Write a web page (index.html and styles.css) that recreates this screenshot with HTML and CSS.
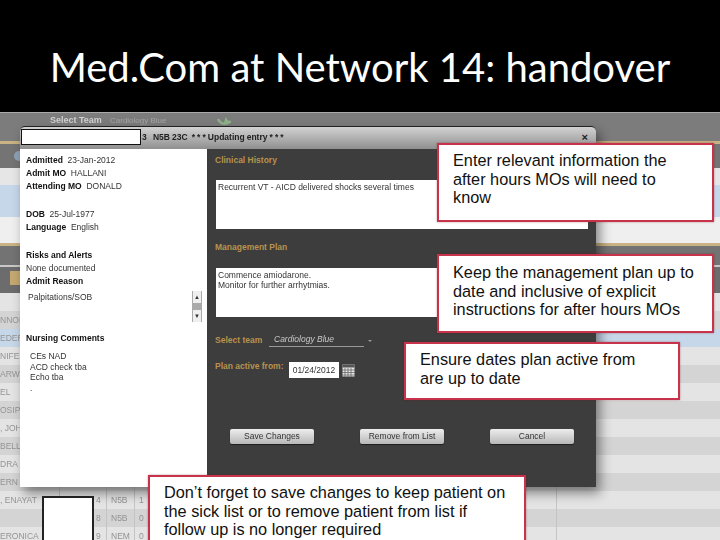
FILE: index.html
```html
<!DOCTYPE html>
<html lang="en">
<head>
<meta charset="utf-8">
<title>Med.Com at Network 14: handover</title>
<link rel="stylesheet" href="styles.css">
</head>
<body>
<main class="slide">
  <header class="slide-head"><h1>Med.Com at Network 14: handover</h1></header>

  <section class="backdrop">
    <div class="bar bar-top">
      <span class="team-label">Select Team</span>
      <span class="team-value">Cardiology Blue</span>
      <svg class="refresh" width="14" height="10" viewBox="0 0 14 10"><path d="M1 2c2 5 7 6 12 3-2 0-3 0-4-2l-1 3" fill="none" stroke="#8fb08a" stroke-width="2.4"/></svg>
    </div>
    <div class="tan"></div>
    <div class="bar bar-mid"><span class="dot"></span></div>
    <div class="row-a r17"></div>
    <div class="row-blue r32"></div>
    <div class="row-w r26"></div>
    <div class="tan"></div>
    <div class="bar bar-low"></div>
    <div class="bar-rule"></div>
    <div class="bar bar-tools"><span class="chip"></span></div>
    <div class="rows">
      <div class="row row-light"><span class="c-name"></span><span class="c-a"></span><span class="c-b"></span><span class="c-c"></span></div>
      <div class="row row-dark"><span class="c-name">NNON</span><span class="c-a"></span><span class="c-b"></span><span class="c-c"></span></div>
      <div class="row row-sel"><span class="c-name">EDER</span><span class="c-a"></span><span class="c-b"></span><span class="c-c"></span></div>
      <div class="row row-light"><span class="c-name">NIFER</span><span class="c-a"></span><span class="c-b"></span><span class="c-c"></span></div>
      <div class="row row-dark"><span class="c-name">ARW</span><span class="c-a"></span><span class="c-b"></span><span class="c-c"></span></div>
      <div class="row row-light"><span class="c-name">EL</span><span class="c-a"></span><span class="c-b"></span><span class="c-c"></span></div>
      <div class="row row-dark"><span class="c-name">OSIP</span><span class="c-a"></span><span class="c-b"></span><span class="c-c"></span></div>
      <div class="row row-light"><span class="c-name">, JOH</span><span class="c-a"></span><span class="c-b"></span><span class="c-c"></span></div>
      <div class="row row-dark"><span class="c-name">BELL</span><span class="c-a"></span><span class="c-b"></span><span class="c-c"></span></div>
      <div class="row row-light"><span class="c-name">DRA</span><span class="c-a"></span><span class="c-b"></span><span class="c-c"></span></div>
      <div class="row row-dark"><span class="c-name">ERN</span><span class="c-a"></span><span class="c-b"></span><span class="c-c"></span></div>
      <div class="row row-light"><span class="c-name">, ENAYAT</span><span class="c-a">4</span><span class="c-b">N5B</span><span class="c-c">1</span></div>
      <div class="row row-dark"><span class="c-name"></span><span class="c-a">8</span><span class="c-b">N5B</span><span class="c-c">0</span></div>
      <div class="row row-light"><span class="c-name">ERONICA</span><span class="c-a">9</span><span class="c-b">NEM</span><span class="c-c">0</span></div>
    </div>
  </section>

  <section class="modal">
    <div class="modal-title">
      <span class="mask"></span>
      <span class="title-text">3&nbsp;&nbsp; N5B 23C &nbsp;* * * Updating entry * * *</span>
      <span class="close">×</span>
    </div>
    <div class="modal-body">
      <div class="info">
        <p><b>Admitted</b>&nbsp; 23-Jan-2012</p>
        <p><b>Admit MO</b>&nbsp; HALLANI</p>
        <p><b>Attending MO</b>&nbsp; DONALD</p>
        <p class="gap"><b>DOB</b>&nbsp; 25-Jul-1977</p>
        <p><b>Language</b>&nbsp; English</p>
        <p class="gap"><b>Risks and Alerts</b></p>
        <p>None documented</p>
        <p><b>Admit Reason</b></p>
        <div class="reason">
          <span>Palpitations/SOB</span>
          <div class="scroll">
            <span class="scroll-btn">▲</span>
            <span class="scroll-thumb"></span>
            <span class="scroll-btn">▼</span>
          </div>
        </div>
        <p class="nursing"><b>Nursing Comments</b></p>
        <div class="comments">CEs NAD<br>ACD check tba<br>Echo tba<br>.</div>
      </div>
      <div class="form">
        <h2 class="first">Clinical History</h2>
        <div class="area">Recurrent VT - AICD delivered shocks several times</div>
        <h2 class="second">Management Plan</h2>
        <div class="area area-plan">Commence amiodarone.<br>Monitor for further arrhytmias.</div>
        <div class="field team">
          <h2>Select team</h2>
          <span class="select">Cardiology Blue</span>
          <span class="caret"></span>
        </div>
        <div class="field plan">
          <h2>Plan active from:</h2>
          <span class="date">01/24/2012</span>
          <svg class="cal" width="13" height="13" viewBox="0 0 13 13">
            <rect x=".5" y=".5" width="12" height="12" fill="#e8e8e8"/>
            <rect x=".5" y=".5" width="12" height="3" fill="#555"/>
            <path d="M0 6h13M0 8.5h13M0 11h13M3 4v9M6 4v9M9 4v9" stroke="#666" stroke-width=".8"/>
          </svg>
        </div>
        <div class="actions">
          <span class="btn">Save Changes</span>
          <span class="btn">Remove from List</span>
          <span class="btn">Cancel</span>
        </div>
      </div>
    </div>
  </section>

  <div class="redact"></div>

  <aside class="note note-1">Enter relevant information the after hours MOs will need to know</aside>
  <aside class="note note-2">Keep the management plan up to date and inclusive of explicit instructions for after hours MOs</aside>
  <aside class="note note-3">Ensure dates plan active from are up to date</aside>
  <aside class="note note-4">Don’t forget to save changes to keep patient on the sick list or to remove patient from list if follow up is no longer required</aside>
</main>
</body>
</html>
```

FILE: styles.css
```css
* { box-sizing: border-box; }
html, body { margin: 0; padding: 0; background: #000; }
.slide {
  position: relative;
  width: 720px;
  height: 540px;
  overflow: hidden;
  font-family: "Liberation Sans", Arial, sans-serif;
  background: #e4e4e4;
}
.slide-head {
  height: 112px;
  background: #000;
  display: flex;
  justify-content: center;
  padding-top: 42px;
}
.slide-head h1 {
  margin: 0;
  font: 400 40px/50px Lato, sans-serif;
  color: #fff;
  white-space: nowrap;
}

/* Washed out table behind the dialog */
.backdrop { filter: blur(.6px); color: #949494; }
.bar { background: #777; display: flex; align-items: center; }
.bar-top {
  height: 29px;
  border-top: 1px solid #aaa;
  padding: 0 0 14px 50px;
  background: #7c7c7c;
}
.team-label { font-size: 9px; font-weight: bold; color: #d0d0d0; width: 60px; }
.team-value { font-size: 8px; color: #a5a5a5; width: 103px; }
.refresh { margin: 3px 0 0 4px; }
.tan { height: 3px; background: #c9b283; }
.bar-mid { height: 24px; padding-left: 14px; background: #747474; }
.dot { width: 10px; height: 10px; border-radius: 50%; background: #8ea3b8; }
.r17 { height: 17px; }
.r32 { height: 32px; }
.r26 { height: 26px; }
.row-a { background: #e6e6e6; }
.row-blue { background: #c7d7ea; }
.row-w { background: #efefef; }
.bar-low { height: 19px; background: #737373; }
.bar-rule { height: 2px; background: #c8c8c8; }
.bar-tools { height: 26px; padding: 0 0 4px 10px; background: #6c6c6c; }
.chip { width: 11px; height: 14px; background: #c4a870; }
.rows { display: flex; flex-direction: column; }
.row {
  height: 18px;
  display: grid;
  grid-template-columns: 60px 47px 28px 422px 1fr;
  font-size: 8.5px;
  line-height: 18px;
}
.row span { padding-left: 4px; border-right: 1px solid #c4c4c4; white-space: nowrap; overflow: hidden; }
.row .c-name { padding-left: 0; }
.row .c-a { padding-left: 36px; }
.row-light { background: #e4e4e4; }
.row-dark { background: #d4d4d4; }
.row-sel { background: #c7d7ea; }

/* Dialog */
.modal {
  position: absolute;
  left: 20px;
  top: 126px;
  width: 576px;
  height: 361px;
  box-shadow: 4px 6px 12px rgba(0, 0, 0, .45);
  display: flex;
  flex-direction: column;
  border-radius: 5px 5px 0 0;
}
.modal-title {
  height: 23px;
  flex: none;
  display: flex;
  align-items: center;
  padding: 0 8px 3px 1px;
  background: linear-gradient(#d2d2d2, #8f8f8f);
  border-top: 1px solid #222;
  border-radius: 5px 5px 0 0;
  font-size: 8.5px;
  font-weight: bold;
  color: #222;
}
.mask {
  width: 120px;
  height: 16px;
  background: #fff;
  border: 1px solid #111;
  margin-right: 1px;
}
.title-text { flex: 1; filter: blur(.3px); white-space: nowrap; word-spacing: -.3px; }
.close { font-size: 11px; color: #222; }
.modal-body { flex: 1; display: flex; min-height: 0; }

.info {
  width: 187px;
  background: #fff;
  padding: 5px 5px 0 6px;
  font-size: 8.5px;
  color: #333;
  filter: blur(.25px);
}
.info p { margin: 0; height: 13px; line-height: 13px; white-space: nowrap; }
.info b { color: #111; }
.info .gap { margin-top: 15px; }
.reason {
  display: flex;
  justify-content: space-between;
  padding: 3px 0 0 2px;
  height: 44px;
}
.reason > span { line-height: 13px; }
.scroll {
  width: 10px;
  height: 31px;
  display: flex;
  flex-direction: column;
  background: #efefef;
  border-left: 1px solid #aaa;
  border-right: 1px solid #aaa;
}
.scroll-btn { height: 12px; font-size: 6px; line-height: 12px; text-align: center; color: #333; }
.scroll-thumb { height: 7px; background: #aaa; }
.comments { padding: 6px 0 0 4px; line-height: 10.7px; }

.form {
  flex: 1;
  background: #3d3d3d;
  padding: 5px 8px 0;
  font-size: 8.5px;
}
.form h2 {
  margin: 0;
  font-size: 8.5px;
  line-height: 13px;
  font-weight: bold;
  color: #b8924e;
  white-space: nowrap;
}
.area {
  margin: 13px 0 0 1px;
  height: 49px;
  background: #fff;
  color: #333;
  padding: 2px;
  line-height: 10px;
  filter: blur(.25px);
}
.form .second { margin-top: 12px; }
.area-plan { margin-top: 14px; }
.field { display: flex; align-items: center; }
.team { margin-top: 16px; height: 14px; }
.team h2 { width: 54px; }
.select {
  width: 95px;
  height: 14px;
  border-bottom: 1px solid #999;
  padding-left: 5px;
  font-style: italic;
  color: #c8c8c8;
  line-height: 12px;
  filter: blur(.25px);
}
.caret {
  margin-left: 4px;
  border: 2.5px solid transparent;
  border-top-color: #999;
  margin-top: 3px;
}
.plan { margin-top: 15px; height: 16px; }
.plan h2 { width: 74px; margin-top: -7px; }
.date {
  width: 50px;
  height: 16px;
  background: #fff;
  color: #333;
  text-align: center;
  line-height: 17px;
  filter: blur(.25px);
}
.cal { margin-left: 3px; }
.actions { display: flex; gap: 46px; margin: 51px 0 0 15px; }
.btn {
  width: 84px;
  height: 15px;
  border-radius: 2px;
  background: linear-gradient(#ededed, #b8b8b8);
  box-shadow: 0 1px 1px rgba(0, 0, 0, .5);
  color: #333;
  text-align: center;
  line-height: 15px;
  filter: blur(.2px);
}

.redact {
  position: absolute;
  left: 42px;
  top: 496px;
  width: 52px;
  height: 50px;
  background: #fff;
  border: 2px solid #222;
}

/* Callouts */
.note {
  position: absolute;
  background: #fff;
  border: 2px solid #c8334c;
  box-shadow: 0 0 2px rgba(120, 0, 20, .4);
  font-size: 16.3px;
  line-height: 18.6px;
  color: #111;
}
.note-1 { left: 437px; top: 143px; width: 277px; height: 79px; padding: 6px 30px 0 14px; }
.note-2 { left: 437px; top: 254px; width: 277px; height: 79px; padding: 7px 14px 0 14px; }
.note-3 { left: 404px; top: 342px; width: 276px; height: 58px; padding: 6px 30px 0 14px; }
.note-4 { left: 148px; top: 475px; width: 378px; height: 75px; padding: 6px 15px 0 14px; }
```
